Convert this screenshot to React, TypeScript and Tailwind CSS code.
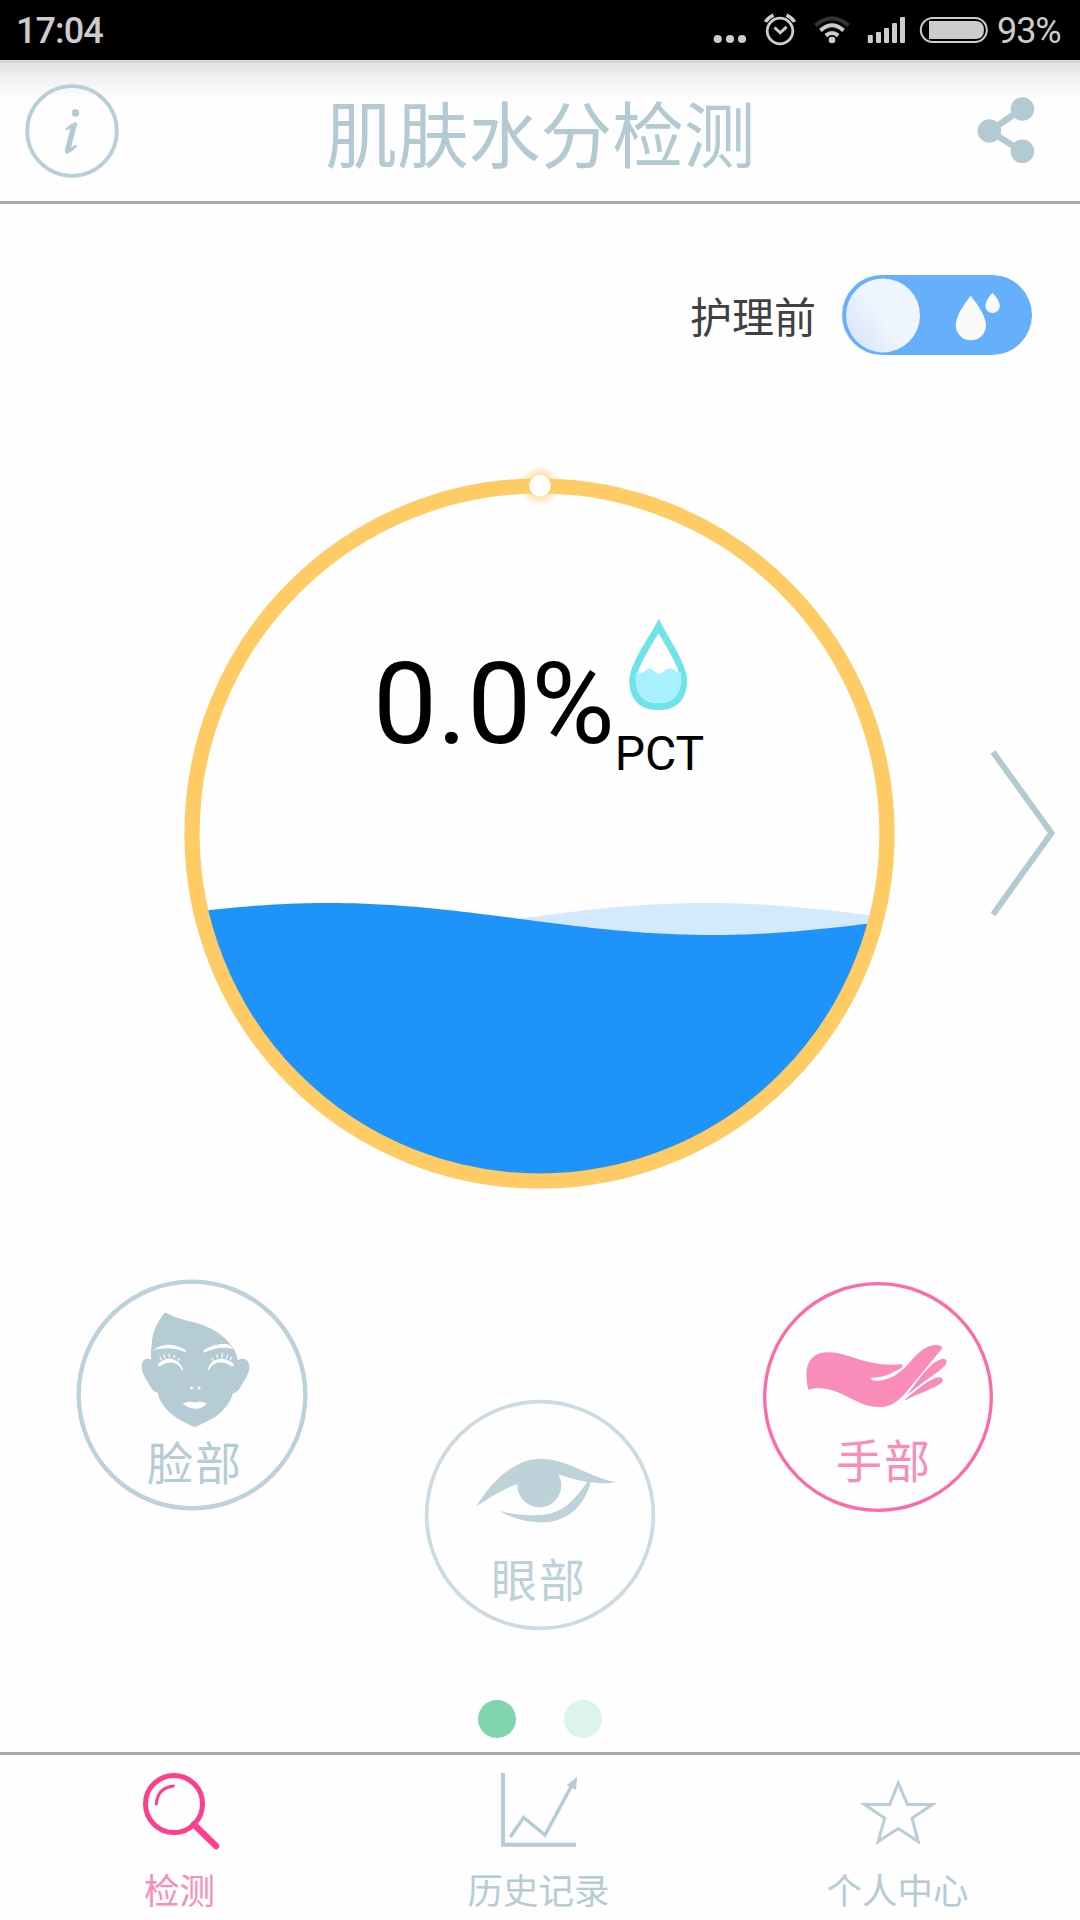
import { type ReactNode } from 'react';

const CJK = "font-['Noto_Sans_CJK_SC',sans-serif]";
const LATIN = "font-['Roboto',sans-serif]";

function StatusBar() {
  return (
    <div className={`flex h-[60px] items-center bg-black pl-[16px] pr-[18px] text-[36px] leading-none text-[#cccccc] ${LATIN}`}>
      <span className="pt-[2px] font-medium tracking-[-0.9px]">17:04</span>
      <svg className="ml-auto" width="276" height="60" viewBox="712 0 276 60" fill="none">
        <g fill="#cccccc">
          <circle cx="717.7" cy="39" r="4.1" />
          <circle cx="730" cy="39" r="4.1" />
          <circle cx="742" cy="39" r="4.1" />
        </g>
        {/* alarm */}
        <g stroke="#cccccc" strokeWidth="2.8">
          <circle cx="780" cy="31" r="12.8" />
          <path d="M774.5 27.5l5.7 5.3 6.4-6" strokeWidth="3" />
          <path d="M765.5 22q2.5-4.5 8-6.8M794.5 22q-2.5-4.5-8-6.8" strokeWidth="3.5" />
        </g>
        {/* wifi */}
        <circle cx="832" cy="40" r="3.3" fill="#cccccc" />
        <path d="M815.5 25.5q16.5-14.5 33 0" stroke="#333333" strokeWidth="4" />
        <g stroke="#cccccc" strokeWidth="4">
          <path d="M820.5 30.5q11.5-10.5 23 0" />
          <path d="M825.8 35.6q6.2-5.2 12.4 0" />
        </g>
        <g fill="#cccccc">
          <rect x="867.8" y="35" width="5" height="8" rx="1" />
          <rect x="876" y="32" width="5" height="11" rx="1" />
          <rect x="884" y="28" width="5" height="15" rx="1" />
          <rect x="892" y="23" width="5" height="20" rx="1" />
          <rect x="900" y="17" width="5" height="26" rx="1" />
        </g>
        {/* battery */}
        <rect x="920.8" y="18" width="66" height="24" rx="12" stroke="#cccccc" strokeWidth="2" />
        <path d="M929 21h46q9 0 9 9t-9 9h-46z" fill="#cccccc" />
      </svg>
      <span className="ml-[9px] w-[65px] whitespace-nowrap pt-[2px] tracking-[-1.1px]">93%</span>
    </div>
  );
}

function Header() {
  return (
    <header className="h-[144px] border-b-[3px] border-[#a9a9a9] bg-linear-to-b from-[#dedede] via-[#f0f0f0] via-12% to-[#fefefe] to-28%">
      <div className="flex h-full items-center justify-between border-t-[3px] border-[#d5d5d5] pl-[25px] pr-[44px]">
        <svg width="94" height="94" viewBox="25 84 94 94" fill="none" className="mb-[2px]">
          <circle cx="72" cy="131" r="44.8" stroke="#b9cfd7" strokeWidth="3.8" />
          <circle cx="75.5" cy="113" r="3.8" fill="#b3cad3" />
          <path
            d="M65.5 129q5-4.5 9.5-6.5l2 1-6.5 24.5q3.5-1.5 5.5-3l.5 1.5q-4.5 5-9.5 7-2.5 0-1.5-4.5l5.5-21.5-4.5 2.5z"
            fill="#b3cad3"
            stroke="#b3cad3"
            strokeWidth="0.8"
          />
        </svg>
        <h1 className={`mb-[3px] mr-[14px] text-[71.7px] leading-[72px] text-[#b3cad3] ${CJK}`}>肌肤水分检测</h1>
        <svg width="60" height="70" viewBox="976 95 60 70" className="mb-[3px]">
          <path d="M1022.4 108l-33 22 33 20.5" stroke="#b3cad3" strokeWidth="6.5" fill="none" />
          <g fill="#b3cad3">
            <circle cx="1022.4" cy="108" r="11.8" />
            <circle cx="989.4" cy="130" r="11.8" />
            <circle cx="1022.4" cy="150.3" r="11.8" />
          </g>
        </svg>
      </div>
    </header>
  );
}

function CareToggle() {
  return (
    <div className="flex items-center justify-end gap-[26px] pr-[48px] pt-[71px]">
      <span className={`text-[42px] leading-[50px] text-[#404040] ${CJK}`}>护理前</span>
      <svg width="190" height="80" viewBox="842 275 190 80">
        <defs>
          <linearGradient id="knob" x1="0" y1="0.9" x2="0.7" y2="0.4">
            <stop offset="0.1" stopColor="#d9e4f6" />
            <stop offset="0.75" stopColor="#eff6ff" />
          </linearGradient>
        </defs>
        <rect x="842" y="275" width="190" height="80" rx="40" fill="#66b0fb" />
        <circle cx="883" cy="315.4" r="37" fill="url(#knob)" />
        <path d="M970.7 295.7C979 306 986 317 986 325.5a15.1 14.8 0 0 1-30.2 0C955.8 317 962.5 306 970.7 295.7z" fill="#fafafa" />
        <path d="M992.4 292.7C996.5 297 999.8 302 999.8 306a7.2 7 0 0 1-14.4 0C985.4 302 988.5 297 992.4 292.7z" fill="#fafafa" />
      </svg>
    </div>
  );
}

// Sine surface of the water, closed along the bottom of the ring
function wavePath(peakX: number) {
  const points: string[] = [];
  for (let x = 0; x <= 710; x += 5) {
    const y = 441 - 16 * Math.cos(((x - peakX) / 766) * Math.PI * 2);
    points.push(`${x} ${y.toFixed(2)}`);
  }
  return `M${points.join('L')}L710 710L0 710Z`;
}

function MoistureGauge() {
  return (
    <div className="grid grid-cols-[185px_710px_185px] items-center pt-[123px]">
      <div />
      <div className="relative h-[711px]">
        <svg className="overflow-visible" width="710" height="711" viewBox="0 0 710 711" fill="none">
          <defs>
            <clipPath id="bowl">
              <circle cx="354.5" cy="355.5" r="347" />
            </clipPath>
            <radialGradient id="glow">
              <stop offset="0.5" stopColor="#fecb64" stopOpacity="0.6" />
              <stop offset="1" stopColor="#fecb64" stopOpacity="0" />
            </radialGradient>
          </defs>
          <g clipPath="url(#bowl)">
            <path d={wavePath(522)} fill="#d2e9fe" />
            <path d={wavePath(144)} fill="#1e93fa" />
          </g>
          <circle cx="354.5" cy="355.5" r="347.5" stroke="#fecb64" strokeWidth="15.2" />
          <circle cx="355" cy="7.7" r="20" fill="url(#glow)" />
          <circle cx="355" cy="7.7" r="10.7" fill="#ffffff" />
        </svg>
        <div className={`absolute left-[188px] top-[141px] flex leading-none text-black ${LATIN}`}>
          <span className="mt-[28px] text-[114px]">0.0%</span>
          <div className="flex flex-col">
            <svg className="ml-[13px]" width="60" height="91" viewBox="628 618.5 60 91">
              <path
                d="M658.7 625.5C667 642 683.8 665 683.8 681q-1.5 25-25.5 25.2Q634 706 632.6 681C632.6 665 650 642 658.7 625.5z"
                fill="#fefefe"
                stroke="#6fe3e7"
                strokeWidth="6.8"
              />
              <path d="M636 671q5 3.5 9-.5 5-5 9 0 4.5 4.5 8 1.5l5-3.5q5-1.5 8 1.5 4 3 6 1.5 1.5 15-3.5 22-6 8.5-18.5 9-13.5 0-19-8-6-7.5-4-23.5z" fill="#a8f0ff" />
            </svg>
            <span className="mt-[20px] text-[48px]">PCT</span>
          </div>
        </div>
      </div>
      <svg className="mb-[2px] ml-[94px]" width="70" height="172" viewBox="989 747 70 172" fill="none">
        <path d="M993 752l58.5 81L993 914.5" stroke="#b3cad3" strokeWidth="6" />
      </svg>
    </div>
  );
}

interface PartButtonProps {
  label: string;
  className: string;
  labelClass: string;
  ring: string;
  ringWidth: number;
  children: ReactNode;
}

function PartButton({ label, className, labelClass, ring, ringWidth, children }: PartButtonProps) {
  return (
    <button className={`relative size-[230px] shrink-0 ${className}`}>
      <svg className="overflow-visible" width="230" height="230" viewBox="0 0 690 690" fill="none">
        <circle cx="345" cy="345" r="340" stroke={ring} strokeWidth={ringWidth} />
        {children}
      </svg>
      <span className={`absolute whitespace-nowrap text-[46px] leading-[50px] tracking-[2px] ${CJK} ${labelClass}`}>
        {label}
      </span>
    </button>
  );
}

function BodyParts() {
  return (
    <div className="flex h-[350px] items-start pl-[77px] pt-[91px]">
      <PartButton label="脸部" className="" labelClass="left-[70px] top-[155px] text-[#b5ccd5]" ring="#bcd1d9" ringWidth={13}>
        <g transform="translate(-52 -60)">
          <path
            d="M317 157C350 178 385 182 415 190C455 202 490 225 512 253C524 264 530 280 535 301C552 290 570 300 569 322C570 340 555 360 545 377C538 390 530 398 520 400C512 430 490 455 465 472C440 487 418 495 405 502C390 494 365 485 340 466C313 445 298 420 294 398C280 396 270 376 262 362C252 346 246 335 246 318C246 298 260 293 275 299C272 280 276 265 276 252C278 215 296 180 317 157Z"
            fill="#b5ccd5"
          />
          <g fill="#fefefe">
            <path d="M280 272C302 250 345 246 380 272L378 277C345 262 310 262 280 272Z" />
            <path d="M431 272C460 252 495 248 512 256L522 268C495 258 460 265 433 278Z" />
            <path d="M368 430C385 424 395 424 406 428C418 424 428 425 442 431C432 440 420 446 406 446C392 446 380 440 368 430Z" />
            <circle cx="396" cy="384" r="4.5" />
            <circle cx="418" cy="384" r="4.5" />
            <path d="M294 314C310 290 355 285 371 330L367 331C355 304 325 300 300 320Z" />
            <path d="M444 330C455 285 505 290 523 314L517 320C490 300 458 304 448 331Z" />
          </g>
          <g stroke="#fefefe" strokeWidth="3.5">
            <path d="M305 300l-5-10M316 296l-4-12M329 293l-1-12M342 294l3-9M354 302l6-7" />
            <path d="M511 300l5-10M500 296l4-12M487 293l1-14M474 294l-3-10M462 302l-6-7" />
          </g>
        </g>
      </PartButton>
      <PartButton label="眼部" className="ml-[118px] mt-[120px]" labelClass="left-[66px] top-[152px] text-[#bdd1d9]" ring="#cbdbe1" ringWidth={11}>
        <g transform="translate(-45 -60)" fill="#bed2da">
          <path d="M199 379C250 295 320 238 385 237C470 232 530 290 617 306C595 312 570 310 541 307C510 304 475 293 445 283A66 66 0 1 1 322 313C280 325 235 355 199 379Z" />
          <path d="M268 392C330 410 390 408 425 400C470 388 505 345 533 304L542 306C525 370 485 415 420 425C365 433 305 415 268 392Z" />
        </g>
      </PartButton>
      <PartButton label="手部" className="ml-[108px] mt-[2px]" labelClass="left-[73px] top-[151px] text-[#f98cb8]" ring="#fe6aa5" ringWidth={10}>
        <g transform="translate(-69 -65)">
          <path
            d="M205 388C190 320 205 278 262 276C325 274 375 322 487 312C490 325 475 328 462 334C440 347 420 350 394 352C392 358 396 362 415 361C455 358 485 335 510 305C540 270 565 252 592 254C602 255 607 260 607 264L492 403C460 435 440 441 415 440C340 438 290 365 205 388Z"
            fill="#f98cb8"
          />
          <path d="M607 296C620 296 623 302 617 313C600 333 560 355 502 403C530 365 575 300 607 296Z" fill="#f98cb8" />
          <path d="M600 351C610 354 610 360 605 367C580 385 540 398 491 421C525 392 575 350 600 351Z" fill="#f98cb8" />
        </g>
      </PartButton>
    </div>
  );
}

function PageDots() {
  return (
    <div className="flex h-[213px] items-end gap-[48px] pb-[14px] pl-[478px]">
      <span className="size-[38px] rounded-full bg-[#7fd5ad]" />
      <span className="size-[38px] rounded-full bg-[#def3ea]" />
    </div>
  );
}

function Tab({ label, active = false, children }: { label: string; active?: boolean; children: ReactNode }) {
  return (
    <button className="flex w-[359px] flex-col items-center pt-[10px]">
      {children}
      <span className={`mt-[9px] text-[35.5px] leading-[50px] ${CJK} ${active ? 'text-[#f98cb8]' : 'text-[#b5ccd5]'}`}>{label}</span>
    </button>
  );
}

function TabBar() {
  return (
    <nav className="flex h-[168px] border-t-[3px] border-[#a9a9a9]">
      <Tab label="检测" active>
        <svg width="90" height="90" viewBox="135 1765 90 90" fill="none" stroke="#ff3d8c">
          <circle cx="174" cy="1804" r="28.5" strokeWidth="5" />
          <path d="M156.4 1804q1-16 17-18" strokeWidth="3" strokeLinecap="round" />
          <path d="M194 1824.5l22 21.5" strokeWidth="6.5" strokeLinecap="round" />
        </svg>
      </Tab>
      <Tab label="历史记录">
        <svg width="90" height="90" viewBox="494 1765 90 90" fill="none" stroke="#b5ccd5">
          <path d="M503 1773v71.8h73" strokeWidth="4" />
          <path d="M510.3 1837l13.3-19.5 21.4 17.5 27-50" strokeWidth="3.5" />
          <path d="M577 1777l-10.5 8.500 9.500 4.500z" fill="#b5ccd5" stroke="none" />
        </svg>
      </Tab>
      <Tab label="个人中心">
        <svg width="90" height="90" viewBox="852.5 1765 90 90" fill="none">
          <path
            d="M897.8 1783l9.2 21.5h25l-20.5 13.700 6.200 23.300-20-13-20 13 6.500-23.300-20.200-13.700h25.200z"
            stroke="#b9cfd7"
            strokeWidth="3"
          />
        </svg>
      </Tab>
    </nav>
  );
}

export default function App() {
  return (
    <div className="flex h-[1920px] w-[1080px] flex-col overflow-hidden bg-[#fefefe]">
      <StatusBar />
      <Header />
      <CareToggle />
      <MoistureGauge />
      <BodyParts />
      <PageDots />
      <TabBar />
    </div>
  );
}
